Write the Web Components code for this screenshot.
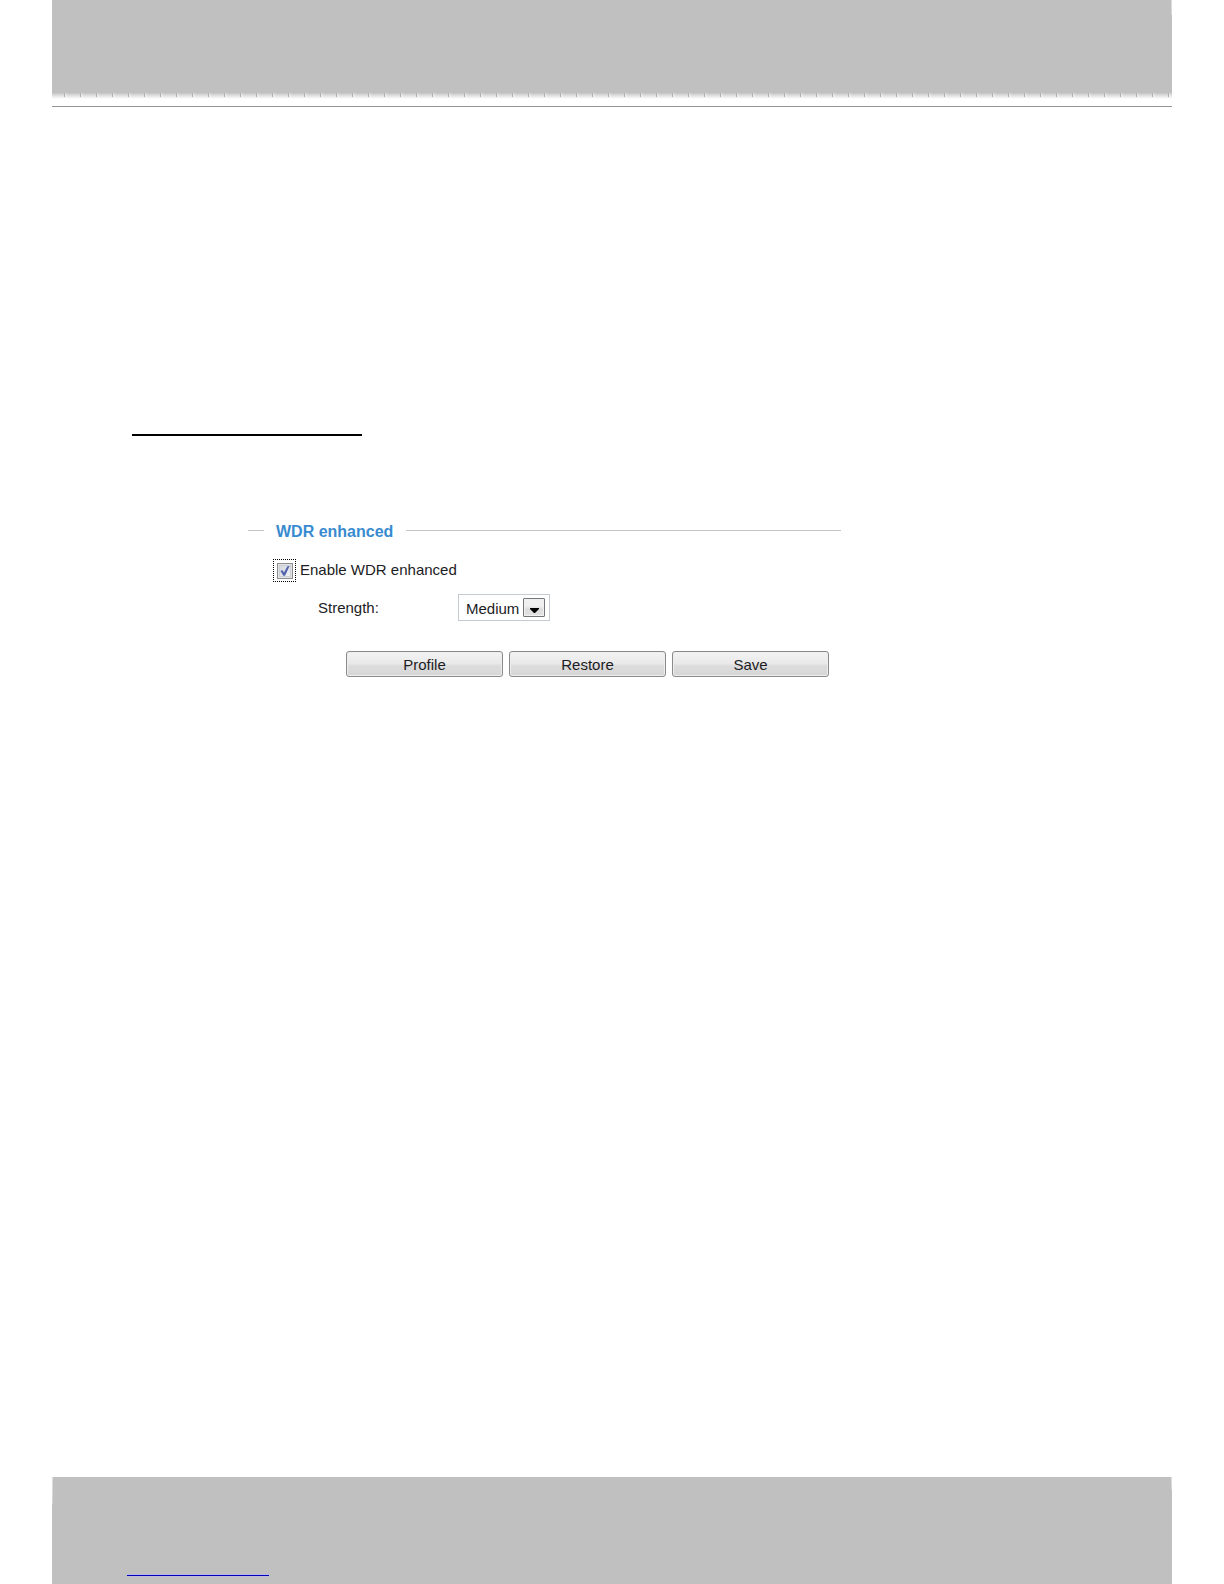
<!DOCTYPE html>
<html lang="en">
<head>
<meta charset="utf-8">
<meta name="viewport" content="width=device-width, initial-scale=1">
<title>WDR enhanced</title>
<style>
  body { margin: 0; background: #fff; color: #1c1c24; font: 15px/20px "Liberation Sans", Arial, sans-serif; }
</style>
</head>
<body>
<manual-page>
  <page-header slot="header"></page-header>
  <section-rule></section-rule>
  <settings-group heading="WDR enhanced">
    <check-option checked>Enable WDR enhanced</check-option>
    <select-option label="Strength:" options="Low,Medium,High" value="Medium"></select-option>
    <button-row>
      <push-button>Profile</push-button>
      <push-button>Restore</push-button>
      <push-button>Save</push-button>
    </button-row>
  </settings-group>
  <page-footer slot="footer"></page-footer>
</manual-page>
<script>
const define = (name, css, html, setup) => customElements.define(name, class extends HTMLElement {
  constructor() {
    super();
    this.attachShadow({ mode: "open" }).innerHTML =
      `<style>*, :host { box-sizing: border-box; } ${css}</style>${html}`;
  }
  connectedCallback() { if (setup) setup(this, this.shadowRoot); }
});

define("manual-page", `
  :host { display: flex; flex-direction: column; min-height: 100vh; padding: 0 52px; }
  main { flex: 1; padding: 327px 80px 40px; }
`, `<slot name="header"></slot><main><slot></slot></main><slot name="footer"></slot>`);

// Grey band, a tiled fading lower edge, then a hairline.
define("page-header", `
  :host { display: block; border-bottom: 1px solid #969696; padding-bottom: 7px; }
  .band { height: 93px; background: linear-gradient(#e0e0e0, #d4d4d4) right top / 1px 15px no-repeat #c0c0c0; }
  .edge { height: 6px; background:
    linear-gradient(90deg, #fff0 12px, #b0b0b0 12px 13px, #ffffff70 13px, #fff0) 0 0 / 16px 4px repeat-x,
    linear-gradient(#c4c4c4, #dedede 40%, #fff); }
`, `<div class="band"></div><div class="edge"></div>`);

define("section-rule", `
  :host { display: block; padding-bottom: 82px; }
  hr { margin: 0; border: 0; height: 2px; width: 230px; max-width: 100%; background: #000; }
`, `<hr>`);

define("settings-group", `
  :host { display: block; max-width: 709px; padding-left: 116px; }
  fieldset { margin: 0; padding: 17px 12px 0 25px; border: 0; border-top: 1px solid #c4c6c4; min-width: 0; }
  legend { margin-left: -9px; padding: 4px 13px 0 12px; font-size: 16px; line-height: 20px; font-weight: bold; color: #388bd0; }
`, `<fieldset><legend></legend><slot></slot></fieldset>`, (el, root) => {
  root.querySelector("legend").textContent = el.getAttribute("heading");
});

define("check-option", `
  :host { display: block; }
  label { display: flex; align-items: center; gap: 4px; }
  .focus { display: grid; place-items: center; width: 23px; height: 23px; border: 1px dotted #000; }
  .box { display: grid; width: 16px; height: 16px; }
  .box > * { grid-area: 1 / 1; }
  input { appearance: none; margin: 0; border: 1px solid #8b8d8e; outline: 0; box-shadow: inset 0 0 0 1px #e4e4e4, inset 0 0 0 2px #ccd0d4; background: linear-gradient(135deg, #cfd3da, #f4f5f6); }
  svg { pointer-events: none; visibility: hidden; }
  input:checked + svg { visibility: visible; }
  .text { padding-bottom: 2px; }
`, `<label><span class="focus"><span class="box"><input type="checkbox">
  <svg width="16" height="16" viewBox="0 0 16 16"><path d="M3.5 8 5.2 7 7 9.4 10.4 3.2 12.6 3 8 12.8 6.4 12.8Z" fill="#5263ad"/></svg>
  </span></span><span class="text"><slot></slot></span></label>`, (el, root) => {
  root.querySelector("input").checked = el.hasAttribute("checked");
});

define("select-option", `
  :host { display: flex; padding: 12px 0 0 45px; }
  label { width: 140px; padding-top: 4px; }
  .field { display: grid; border: 1px solid #c5cbd3; width: 92px; height: 27px; align-items: center; }
  .field > * { grid-area: 1 / 1; }
  select { appearance: none; width: 100%; height: 100%; margin: 0; padding: 2px 26px 0 7px; border: 0; outline: 0; background: none; color: inherit; font: inherit; }
  .arrow { justify-self: end; margin-right: 4px; display: grid; width: 22px; height: 19px; border: 1px solid #74777a; border-radius: 1px; background: linear-gradient(#f0f0f0 40%, #dcdcdc 60%, #e2e2e2); box-shadow: inset 0 0 0 1px #f0f0f0; pointer-events: none; }
`, `<label for="choice"></label><span class="field"><select id="choice"></select>
  <span class="arrow"><svg width="20" height="17" viewBox="0 0 20 17"><path d="M6 9h9v1l-4 4h-1l-4-4z" fill="#000"/></svg></span></span>`, (el, root) => {
  root.querySelector("label").textContent = el.getAttribute("label");
  const select = root.querySelector("select");
  select.replaceChildren(...el.getAttribute("options").split(",").map(text => new Option(text)));
  select.value = el.getAttribute("value");
});

define("button-row", `
  :host { display: flex; justify-content: flex-end; gap: 6px; padding-top: 30px; }
`, `<slot></slot>`);

define("push-button", `
  :host { display: block; flex: 0 1 157px; }
  button { display: block; width: 100%; height: 26px; margin: 0; padding: 1px 0 0; border: 1px solid #8a8a8a; border-radius: 3px; background: linear-gradient(#f3f3f3, #e9e9e9 48%, #dcdcdc 58%, #d6d6d6); box-shadow: inset 0 0 0 1px #eee; color: inherit; font: inherit; }
`, `<button type="button"><slot></slot></button>`);

define("page-footer", `
  :host { display: block; height: 107px; padding: 78px 75px 0; background:
    linear-gradient(#e0e0e0, #d4d4d4) left top / 1px 27px no-repeat,
    linear-gradient(#e0e0e0, #d4d4d4) right top / 1px 13px no-repeat, #c0c0c0; }
  a { display: block; width: 142px; height: 21px; border-bottom: 1px solid #0000b4; box-shadow: 0 1px #bcbcd8, inset 0 -1px #b8b8e8; }
`, `<a href="#"></a>`);
</script>
</body>
</html>
